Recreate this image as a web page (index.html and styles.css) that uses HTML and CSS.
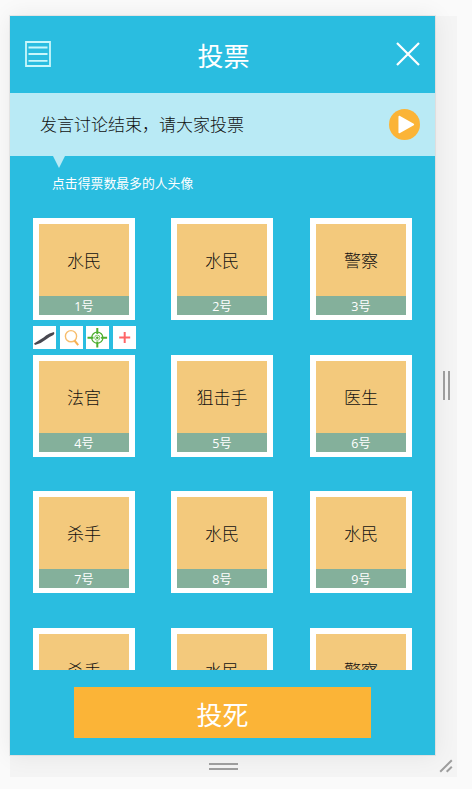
FILE: index.html
```html
<!DOCTYPE html>
<html lang="zh-CN">
<head>
<meta charset="utf-8">
<title>投票</title>
<link rel="stylesheet" href="styles.css">
</head>
<body>
<div class="device">
  <main class="phone">
    <header class="topbar">
      <svg class="menu-icon" viewBox="0 0 26 26"><path d="M1 1h24v24H1zM3.5 6.5h19M3.5 13h19M3.5 19.8h19"/></svg>
      <h1 class="title">投票</h1>
      <svg class="close-icon" viewBox="0 0 24 24"><path d="M1 1l22 22M23 1L1 23"/></svg>
    </header>
    <section class="banner">
      <p class="banner-text">发言讨论结束，请大家投票</p>
      <svg class="play-icon" viewBox="0 0 31 31"><circle cx="15.5" cy="15.5" r="15.5" fill="#fbb437"/><path d="M10.2 7.5v16l14.2-8z" fill="#fff" stroke="#fff" stroke-width="1.5" stroke-linejoin="round"/></svg>
    </section>
    <div class="pointer"></div>
    <p class="hint">点击得票数最多的人头像</p>
    <ul class="players">
      <li class="player">
        <div class="card"><div class="role">水民</div><div class="num">1号</div></div>
        <div class="actions">
          <svg class="action" viewBox="0 0 23 23"><path d="M1 17.4C6 14.6 10 12.2 13 9.6Q16 7.1 21 6Q22 7.6 20.4 9Q16 11 13 13.6Q8 17.8 2 19z" fill="#494850"/></svg>
          <svg class="action" viewBox="0 0 23 23" fill="none"><circle cx="11" cy="10.2" r="5.6" stroke="#f7bd6c" stroke-width="1.4"/><path d="M14.5 14.5l3.7 4.6" stroke="#f7b152" stroke-width="2"/></svg>
          <svg class="action" viewBox="0 0 23 23" fill="none" stroke="#4eae2f"><circle cx="11.3" cy="11.7" r="5.6" stroke-width="1.3"/><path d="M11.3 2v6M11.3 15.4v6M1.5 11.7h6M15.1 11.7h6" stroke-width="2"/><circle cx="11.3" cy="11.7" r="2.6" stroke-width=".7"/><circle cx="11.3" cy="11.7" r="1.3" fill="#4eae2f" stroke="none"/></svg>
          <svg class="action" viewBox="0 0 23 23"><path d="M11.7 6v11M6.2 11.5h11" stroke="#ff6566" stroke-width="2"/></svg>
        </div>
      </li>
      <li class="player"><div class="card"><div class="role">水民</div><div class="num">2号</div></div></li>
      <li class="player"><div class="card"><div class="role">警察</div><div class="num">3号</div></div></li>
      <li class="player"><div class="card"><div class="role">法官</div><div class="num">4号</div></div></li>
      <li class="player"><div class="card"><div class="role">狙击手</div><div class="num">5号</div></div></li>
      <li class="player"><div class="card"><div class="role">医生</div><div class="num">6号</div></div></li>
      <li class="player"><div class="card"><div class="role">杀手</div><div class="num">7号</div></div></li>
      <li class="player"><div class="card"><div class="role">水民</div><div class="num">8号</div></div></li>
      <li class="player"><div class="card"><div class="role">水民</div><div class="num">9号</div></div></li>
      <li class="player"><div class="card"><div class="role">杀手</div></div></li>
      <li class="player"><div class="card"><div class="role">水民</div></div></li>
      <li class="player"><div class="card"><div class="role">警察</div></div></li>
    </ul>
    <button class="vote">投死</button>
  </main>
  <div class="resize-x"><span class="bar-v"></span><span class="bar-v"></span></div>
  <div class="resize-y"><span class="bar-h"></span><span class="bar-h"></span></div>
  <div class="resize-xy"><svg class="grip" viewBox="0 0 14 14"><path d="M1.2 12.8L12.8 1.2M7.7 12.8l5.1-5.1"/></svg></div>
</div>
</body>
</html>
```
FILE: styles.css
```css
* {
  box-sizing: border-box;
  margin: 0;
  padding: 0;
}

body {
  height: 789px;
  padding: 16px 0 0 10px;
  overflow: hidden;
  background: #fafafa;
  font-family: "Open Sans", "Noto Sans CJK SC", sans-serif;
}

.device {
  display: grid;
  grid-template-columns: 425px 22px;
  grid-template-rows: 739px 22px;
  width: 447px;
  background: #f4f4f4;
}

.phone {
  display: flex;
  flex-direction: column;
  background: #2abde0;
  box-shadow: 0 0 0 1px rgba(0, 0, 0, 0.06), 0 0 22px rgba(0, 0, 0, 0.07);
}

.topbar {
  display: flex;
  align-items: center;
  justify-content: space-between;
  height: 77px;
  padding: 0 15px 1px;
}

.menu-icon {
  width: 26px;
  height: 26px;
  fill: none;
  stroke: #c9f7fb;
  stroke-width: 1.8;
}

.title {
  color: #fff;
  font-size: 26px;
  font-weight: 400;
  line-height: 38px;
  padding-top: 4px;
}

.close-icon {
  width: 24px;
  height: 24px;
  fill: none;
  stroke: #fff;
  stroke-width: 2.2;
}

.banner {
  display: flex;
  align-items: center;
  justify-content: space-between;
  height: 63px;
  padding: 0 15px 0 30px;
  background: #b9eaf5;
}

.banner-text {
  padding-top: 1px;
  color: #111;
  font-size: 17px;
  font-weight: 300;
  line-height: 26px;
}

.play-icon {
  width: 31px;
  height: 31px;
}

.pointer {
  width: 12px;
  height: 12px;
  margin-left: 43px;
  background: #b9eaf5;
  clip-path: polygon(0 0, 100% 0, 50% 100%);
}

.hint {
  height: 50px;
  padding: 5px 0 0 42px;
  color: #fff;
  font-size: 12.85px;
  line-height: 20px;
}

.players {
  display: grid;
  grid-template-columns: 138px 139px 102px;
  grid-auto-rows: 136.67px;
  height: 452px;
  padding-left: 23px;
  overflow: hidden;
  list-style: none;
}

.card {
  width: 102px;
  height: 102px;
  padding: 6px 6px 5px;
  background: #fff;
}

.role {
  height: 72px;
  background: #f3c97c;
  color: #111;
  font-size: 17px;
  font-weight: 300;
  line-height: 74px;
  text-align: center;
}

.num {
  height: 19px;
  background: #84b09b;
  color: #fff;
  font-size: 12.5px;
  line-height: 21px;
  text-align: center;
}

.actions {
  display: flex;
  gap: 3.7px;
  width: 104px;
  margin-top: 6px;
}

.action {
  flex: none;
  width: 23px;
  height: 23px;
  background: #fff;
}

.vote {
  width: 297px;
  height: 51px;
  margin: 17px 0 0 64px;
  padding-top: 4px;
  border: 0;
  background: #fbb437;
  color: #fff;
  font: inherit;
  font-size: 26px;
  line-height: 38px;
}

.resize-x,
.resize-y,
.resize-xy {
  display: flex;
  align-items: center;
  justify-content: center;
}

.resize-x {
  gap: 3px;
}

.resize-y {
  flex-direction: column;
  gap: 3px;
  padding-left: 2px;
}

.bar-v {
  width: 2px;
  height: 29px;
  background: #9d9d9d;
}

.bar-h {
  width: 29px;
  height: 2px;
  background: #9d9d9d;
}

.grip {
  width: 14px;
  height: 14px;
  fill: none;
  stroke: #9d9d9d;
  stroke-width: 2;
}
```
